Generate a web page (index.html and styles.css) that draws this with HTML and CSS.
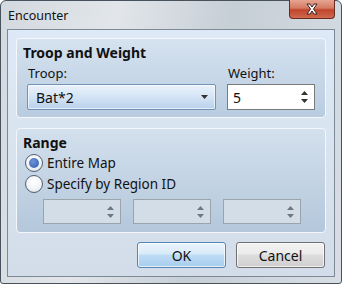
FILE: index.html
```html
<!DOCTYPE html>
<html lang="en">

<head>
    <meta charset="UTF-8" />
    <meta name="viewport" content="width=device-width, initial-scale=1.0" />
    <link rel="stylesheet" href="styles.css">
    <title>Encounter</title>
</head>

<body>

    <div class="window">
        <!-- title bar -->
        <div class="titlebar">
            <span class="title">Encounter</span>
            <button class="close">
                <svg width="16" height="12" viewBox="0 0 16 12">
                    <path d="M3 1 L6 1 L8 4 L10 1 L13 1 L9.5 6 L13 11 L10 11 L8 8 L6 11 L3 11 L6.5 6 Z"
                        fill="#ffffff" stroke="#3b2320" stroke-width="1" stroke-linejoin="round" />
                </svg>
            </button>
        </div>

        <div class="client">
            <!-- troop and weight -->
            <div class="group">
                <div class="group-title">Troop and Weight</div>
                <div class="row">
                    <div class="field troop">
                        <label>Troop:</label>
                        <div class="combo">
                            <span>Bat*2</span>
                            <svg width="7" height="4" viewBox="0 0 7 4"><path d="M0 0 H7 L3.5 4 Z" fill="#333" /></svg>
                        </div>
                    </div>
                    <div class="field weight">
                        <label>Weight:</label>
                        <div class="spin">
                            <span>5</span>
                            <div class="arrows">
                                <svg width="7" height="4" viewBox="0 0 7 4"><path d="M0 4 H7 L3.5 0 Z" fill="#333" /></svg>
                                <svg width="7" height="4" viewBox="0 0 7 4"><path d="M0 0 H7 L3.5 4 Z" fill="#333" /></svg>
                            </div>
                        </div>
                    </div>
                </div>
            </div>

            <!-- range -->
            <div class="group range">
                <div class="group-title">Range</div>
                <div class="radio checked"><span class="dot"></span>Entire Map</div>
                <div class="radio"><span class="dot"></span>Specify by Region ID</div>
                <div class="regions">
                    <div class="spin disabled">
                        <span></span>
                        <div class="arrows">
                            <svg width="7" height="4" viewBox="0 0 7 4"><path d="M0 4 H7 L3.5 0 Z" fill="#6d7883" /></svg>
                            <svg width="7" height="4" viewBox="0 0 7 4"><path d="M0 0 H7 L3.5 4 Z" fill="#6d7883" /></svg>
                        </div>
                    </div>
                    <div class="spin disabled">
                        <span></span>
                        <div class="arrows">
                            <svg width="7" height="4" viewBox="0 0 7 4"><path d="M0 4 H7 L3.5 0 Z" fill="#6d7883" /></svg>
                            <svg width="7" height="4" viewBox="0 0 7 4"><path d="M0 0 H7 L3.5 4 Z" fill="#6d7883" /></svg>
                        </div>
                    </div>
                    <div class="spin disabled">
                        <span></span>
                        <div class="arrows">
                            <svg width="7" height="4" viewBox="0 0 7 4"><path d="M0 4 H7 L3.5 0 Z" fill="#6d7883" /></svg>
                            <svg width="7" height="4" viewBox="0 0 7 4"><path d="M0 0 H7 L3.5 4 Z" fill="#6d7883" /></svg>
                        </div>
                    </div>
                </div>
            </div>

            <!-- dialog buttons -->
            <div class="buttons">
                <button class="btn default">OK</button>
                <button class="btn">Cancel</button>
            </div>
        </div>
    </div>

</body>

</html>
```

FILE: styles.css
```css
* {
    box-sizing: border-box;
}

body {
    margin: 0;
    font-family: 'Noto Sans', sans-serif;
    font-size: 13px;
    color: #111;
    background: #ffffff;
}

.window {
    width: 342px;
    height: 284px;
    border: 1px solid #47525d;
    border-radius: 6px 6px 3px 3px;
    background: linear-gradient(100deg, #d3d9df 0%, #e2e6ea 30%, #c6ced6 60%, #d8dee4 100%);
    display: flex;
    flex-direction: column;
}

.titlebar {
    height: 28px;
    display: flex;
    justify-content: space-between;
    align-items: flex-start;
    padding-left: 7px;
    padding-right: 6px;
}

.title {
    font-size: 12.5px;
    margin-top: 6px;
    color: #111;
}

.close {
    width: 46px;
    height: 19px;
    margin-top: -1px;
    border: 1px solid #6a2b22;
    border-top: 0;
    border-radius: 0 0 4px 4px;
    background: linear-gradient(#e6a592 0%, #d47a62 45%, #c0442c 55%, #cf6a4e 100%);
    display: flex;
    align-items: center;
    justify-content: center;
    padding: 0;
}

.client {
    flex: 1;
    margin: 0 6px 6px 6px;
    border: 1px solid #7d8a96;
    background: linear-gradient(#dde9f6, #d3dde9);
    padding: 8px;
    display: flex;
    flex-direction: column;
}

.group {
    border: 1px solid #f3f7fb;
    border-radius: 4px;
    background: linear-gradient(#d5e2ef, #b9cce0);
    padding: 5px 10px 7px 6px;
}

.group-title {
    font-weight: bold;
    font-size: 14px;
    line-height: 18px;
}

.row {
    display: flex;
    gap: 11px;
    padding-left: 4px;
}

.field label {
    display: block;
    line-height: 16px;
    margin-top: 3px;
    margin-bottom: 3px;
    padding-left: 1px;
}

.troop {
    width: 189px;
}

.weight {
    width: 88px;
}

.combo {
    height: 26px;
    border: 1px solid #7292b6;
    border-radius: 2px;
    background: linear-gradient(#eaf2fb 0%, #d4e4f5 50%, #b9d2ec 100%);
    box-shadow: inset 0 0 0 1px rgba(255, 255, 255, 0.6);
    display: flex;
    align-items: center;
    justify-content: space-between;
    padding: 0 7px 0 8px;
    font-size: 14px;
}

.spin {
    height: 26px;
    border: 1px solid #7a7a7a;
    background: #ffffff;
    display: flex;
    align-items: center;
    justify-content: space-between;
    padding: 0 6px 0 5px;
    font-size: 14px;
}

.arrows {
    display: flex;
    flex-direction: column;
    gap: 4px;
}

.arrows svg {
    display: block;
}

.range {
    margin-top: 10px;
    flex: 1;
    background: linear-gradient(#d3e0ed, #b4c7db);
}

.radio {
    display: flex;
    align-items: center;
    height: 21px;
    margin-left: 2px;
    font-size: 13.5px;
}

.radio .dot {
    width: 18px;
    height: 18px;
    border-radius: 50%;
    border: 1px solid #4f5f70;
    background: radial-gradient(circle at 50% 35%, #ffffff 0%, #f2f4f7 55%, #d9dde3 100%);
    margin-right: 4px;
    display: flex;
    align-items: center;
    justify-content: center;
}

.radio.checked .dot::after {
    content: '';
    width: 10px;
    height: 10px;
    border-radius: 50%;
    background: radial-gradient(circle at 40% 35%, #6f93d6, #2e5bb0);
}

.regions {
    display: flex;
    gap: 12px;
    margin-top: 5px;
    margin-left: 20px;
}

.spin.disabled {
    width: 78px;
    height: 25px;
    border-color: #9ba3ab;
    background: #d2dde8;
}

.buttons {
    display: flex;
    justify-content: flex-end;
    gap: 10px;
    margin-top: 9px;
    padding-right: 1px;
}

.btn {
    width: 89px;
    height: 26px;
    border: 1px solid #707070;
    border-radius: 3px;
    background: linear-gradient(#f2f2f2 0%, #ebebeb 45%, #dddddd 50%, #cfcfcf 100%);
    box-shadow: inset 0 0 0 1px rgba(255, 255, 255, 0.7);
    font-family: inherit;
    font-size: 14px;
    color: #111;
    padding: 0;
}

.btn.default {
    border-color: #5586b6;
    background: linear-gradient(#eaf4fc 0%, #d9ebf9 45%, #bedcf5 50%, #a7cdee 100%);
}
```
